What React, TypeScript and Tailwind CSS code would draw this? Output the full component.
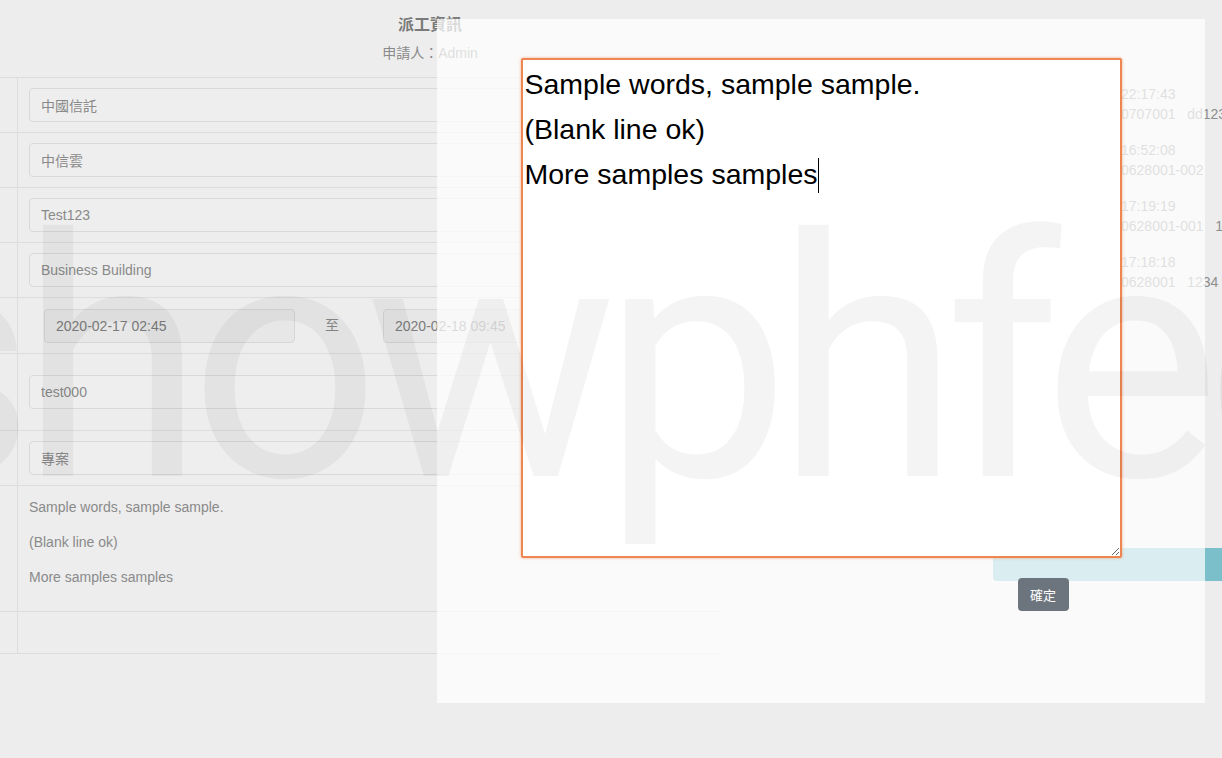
import { useEffect, useRef } from "react";

function Field({ value, className }: { value: string; className: string }) {
  return <input readOnly value={value} className={className} />;
}

const rows = [
  { t: "22:17:43", c: "0707001   dd123" },
  { t: "16:52:08", c: "0628001-002" },
  { t: "17:19:19", c: "0628001-001   1" },
  { t: "17:18:18", c: "0628001   1234" },
];

export default function App() {
  const ref = useRef<HTMLTextAreaElement>(null);
  useEffect(() => {
    const el = ref.current;
    if (el) {
      el.focus();
      const n = el.value.length;
      el.setSelectionRange(n, n);
    }
  }, []);

  const inputCls =
    "h-[34px] w-[679px] rounded-[4px] border border-[#d9d9d9] bg-[#eeeeee] pl-[11px] text-[14px] text-[#8a8a8a] outline-none font-['Liberation_Sans','Noto_Sans_CJK_TC',sans-serif]";
  const dateCls =
    "h-[34px] w-[251px] rounded-[4px] border border-[#d6d6d6] bg-[#e7e7e7] pl-[11px] text-[14px] text-[#7c7c7c] outline-none font-['Liberation_Sans',sans-serif]";

  return (
    <div className="relative h-[758px] w-[1222px] overflow-hidden bg-[#ededed] font-['Liberation_Sans','Noto_Sans_CJK_TC',sans-serif]">
      {/* underlying page */}
      <div className="w-[860px] pt-[14px] text-center">
        <div className="text-[16px] font-bold leading-[22px] text-[#7a7a7a]">派工資訊</div>
        <div className="mt-[7px] text-[14px] leading-[20px] text-[#8a8a8a]">申請人：Admin</div>
      </div>
      <div className="mt-[14px] flex">
        <div className="w-[720px] shrink-0 border-t border-[#dcdcdc]">
          {["中國信託", "中信雲", "Test123", "Business Building"].map((v) => (
            <div key={v} className="flex h-[55px] border-b border-[#dcdcdc]">
              <div className="w-[18px] shrink-0 border-r border-[#dcdcdc]" />
              <div className="flex items-center pl-[11px]">
                <Field value={v} className={inputCls} />
              </div>
            </div>
          ))}
          <div className="flex h-[56px] border-b border-[#dcdcdc]">
            <div className="w-[18px] shrink-0 border-r border-[#dcdcdc]" />
            <div className="flex items-center pl-[26px]">
              <Field value="2020-02-17 02:45" className={dateCls} />
              <span className="w-[88px] pr-[14px] text-center text-[14px] text-[#8a8a8a]">至</span>
              <Field value="2020-02-18 09:45" className={dateCls} />
            </div>
          </div>
          <div className="flex h-[77px] border-b border-[#dcdcdc]">
            <div className="w-[18px] shrink-0 border-r border-[#dcdcdc]" />
            <div className="flex items-center pl-[11px]">
              <Field value="test000" className={inputCls} />
            </div>
          </div>
          <div className="flex h-[55px] border-b border-[#dcdcdc]">
            <div className="w-[18px] shrink-0 border-r border-[#dcdcdc]" />
            <div className="flex items-center pl-[11px]">
              <Field value="專案" className={inputCls} />
            </div>
          </div>
          <div className="flex h-[126px] border-b border-[#dcdcdc]">
            <div className="w-[18px] shrink-0 border-r border-[#dcdcdc]" />
            <div className="pl-[11px] pt-[11px] text-[14px] leading-[20px] text-[#8a8a8a]">
              <p className="mb-[15px]">Sample words, sample sample.</p>
              <p className="mb-[15px]">(Blank line ok)</p>
              <p>More samples samples</p>
            </div>
          </div>
          <div className="flex h-[42px] border-b border-[#dcdcdc]">
            <div className="w-[18px] shrink-0 border-r border-[#dcdcdc]" />
          </div>
        </div>
        <div className="flex flex-1 flex-col pt-[7px]">
          <div className="pl-[401px]">
            {rows.map((r) => (
              <div key={r.t} className="mb-[16px] whitespace-pre text-[14px] leading-[20px] text-[#8e8e8e]">
                <div>{r.t}</div>
                <div>{r.c}</div>
              </div>
            ))}
          </div>
          <div className="ml-[273px] mt-[240px] h-[33px] rounded-l-[4px] bg-[#7bbfca]" />
        </div>
      </div>

      {/* modal panel */}
      <div className="absolute left-[437px] top-[19px] flex h-[684px] w-[768px] flex-col items-center bg-[rgba(255,255,255,0.72)] pt-[39px]">
        <div className="relative">
          <textarea
            ref={ref}
            autoFocus
            defaultValue={"Sample words, sample sample.\n(Blank line ok)\nMore samples samples"}
            className="block h-[500px] w-[601px] resize-y rounded-[2px] border-2 border-[#ee8652] bg-white px-[2px] pt-[2px] font-['Liberation_Sans',sans-serif] text-[28.5px] leading-[45px] text-black caret-transparent shadow-[0_0_3px_rgba(238,120,60,0.6)] outline-none"
          />
          <span className="pointer-events-none absolute left-[297px] top-[100px] h-[35px] w-[1px] bg-black" />
        </div>
        <div className="mt-[20px] flex w-[601px] justify-end pr-[53px]">
          <button className="h-[33px] w-[51px] rounded-[4px] bg-[#6c757d] font-['Noto_Sans_CJK_TC',sans-serif] text-[13px] text-white">
            確定
          </button>
        </div>
      </div>

      {/* watermark */}
      <div className="pointer-events-none absolute left-[-138px] top-[194px] whitespace-nowrap font-['Roboto',sans-serif] text-[335px] font-normal leading-none tracking-[-15px] text-[rgba(0,0,0,0.045)]">
        showphfee
      </div>
    </div>
  );
}
